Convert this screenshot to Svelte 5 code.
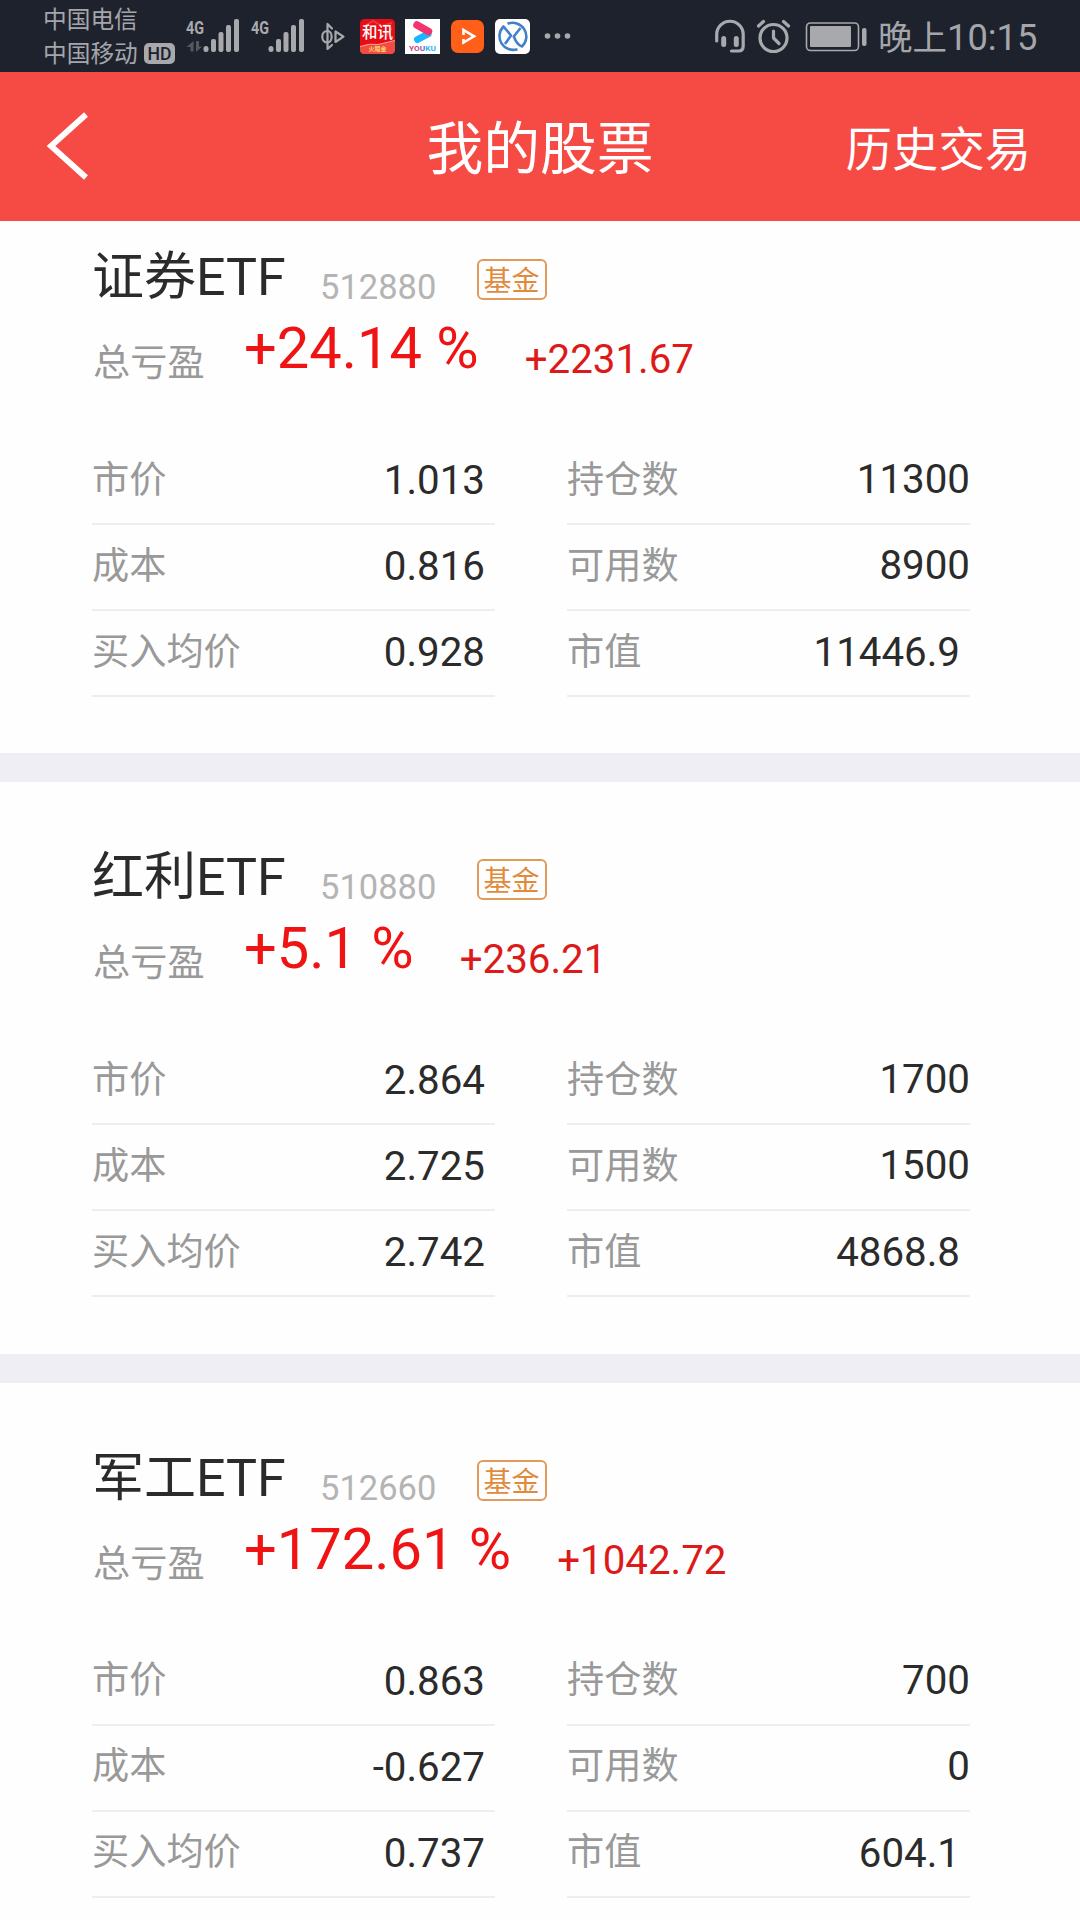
<script>
  const stocks = [
    {
      name: '证券ETF', code: '512880', pct: '+24.14 %', amount: '+2231.67',
      left: [['市价', '1.013'], ['成本', '0.816'], ['买入均价', '0.928']],
      right: [['持仓数', '11300'], ['可用数', '8900'], ['市值', '11446.9']]
    },
    {
      name: '红利ETF', code: '510880', pct: '+5.1 %', amount: '+236.21',
      left: [['市价', '2.864'], ['成本', '2.725'], ['买入均价', '2.742']],
      right: [['持仓数', '1700'], ['可用数', '1500'], ['市值', '4868.8']]
    },
    {
      name: '军工ETF', code: '512660', pct: '+172.61 %', amount: '+1042.72',
      left: [['市价', '0.863'], ['成本', '-0.627'], ['买入均价', '0.737']],
      right: [['持仓数', '700'], ['可用数', '0'], ['市值', '604.1']]
    }
  ];
</script>

{#snippet signal()}
  <g class="fill">
    <text class="net" x="0" y="33.5" textLength="18" lengthAdjust="spacingAndGlyphs">4G</text>
    <rect x="17.5" y="46" width="5" height="6" rx="2.5" />
    <rect x="25" y="39" width="5" height="13" rx="2" />
    <rect x="32.5" y="32" width="5" height="20" rx="2" />
    <rect x="40" y="25" width="5" height="27" rx="2" />
    <rect x="48" y="19" width="5" height="33" rx="2" />
  </g>
{/snippet}

<div class="screen">
  <div class="status">
    <div class="carriers">
      <span>中国电信</span>
      <span class="second">中国移动
        <svg width="31" height="22" viewBox="0 0 31 22">
          <rect class="fill" width="31" height="21" rx="5" />
          <text class="hd" x="3.5" y="17" textLength="24" lengthAdjust="spacingAndGlyphs">HD</text>
        </svg>
      </span>
    </div>

    <svg class="icons" width="400" height="72" viewBox="180 0 400 72">
      <g transform="translate(186 0)">{@render signal()}</g>
      <path class="dim" d="M193.500 52V41L186.500 47H190.500V51.500H193.500ZM196 41V52L202 46.500H199V41Z" />
      <g transform="translate(251 0)">{@render signal()}</g>
      <g class="line" stroke-width="2.2">
        <path d="M332 28.500L327.500 24V49L332 45" />
        <path d="M327.500 31C320.500 31 320.500 42.500 327.500 42.500M327.500 31C333 31 333 42.500 327.500 42.500" />
        <path d="M335.5 31.5V42L343.5 36.7Z" />
      </g>

      <g>
        <rect x="360" y="19" width="35" height="35" rx="4.5" fill="#e80d15" />
        <path d="M365 26l8-5 9 5 10-3M384 40l8-12" stroke="#f3343c" stroke-width="2" fill="none" />
        <path d="M360 46.500Q370 43 378 44.500L395 41V49.500Q395 54 390.500 54H364.500Q360 54 360 49.500Z" fill="#f04c43" />
        <path d="M360 46.500Q370 43 378 44.500L395 40.500" stroke="#ffa49b" stroke-width="1" fill="none" />
        <text class="hexun" x="362" y="37.500" textLength="31">和讯</text>
        <text class="event" x="368.500" y="51" textLength="18">火眼金</text>
      </g>

      <g>
        <rect x="405" y="19" width="35" height="35" fill="#fff" />
        <path d="M417.500 39.500L428 34" stroke="#1cb5ff" stroke-width="7" stroke-linecap="round" />
        <path d="M417 25L428.500 31.500" stroke="#f4336f" stroke-width="7.500" stroke-linecap="round" />
        <text class="youku" x="409" y="50.500" textLength="27" lengthAdjust="spacingAndGlyphs"><tspan fill="#d0427f">YO</tspan><tspan fill="#8160b6">U</tspan><tspan fill="#2fb6ef">KU</tspan></text>
      </g>

      <g>
        <rect x="451" y="20" width="33" height="33" rx="7" fill="#ff5f18" />
        <path d="M463.500 35V30L474 36.300L463.500 42.500V39" fill="none" stroke="#fff" stroke-width="2.600" />
      </g>

      <g>
        <rect x="495" y="19" width="35" height="35" rx="5" fill="#fff" />
        <g fill="none" stroke="#4281c9" stroke-width="2.600" stroke-linejoin="round">
          <path d="M507.500 23.800A13.700 13.700 0 0 1 522 46.500Q517 45 513.800 36.500L520.500 28" />
          <path d="M517.500 49.200A13.700 13.700 0 0 1 503.500 26.500L511 35.500L505 44" />
        </g>
      </g>
      <g class="fill"><circle cx="547.500" cy="36" r="2.800" /><circle cx="557.500" cy="36" r="2.800" /><circle cx="567.500" cy="36" r="2.800" /></g>
    </svg>

    <svg class="icons right" width="160" height="72" viewBox="710 0 160 72">
      <g class="line" stroke-width="3.200">
        <path d="M716.700 41V34.500A13.200 13.200 0 0 1 743.200 34.500V46Q743.200 51 738.500 51H731.500" />
        <path d="M723.700 38.500V44.500M736.300 38.500V44.500" stroke-width="5" />
        <circle cx="773.500" cy="38" r="13.500" />
        <path d="M773.500 31V38L779 43.500" />
        <path d="M758.500 26L763.500 21.500M788.500 26L783.500 21.500" />
        <rect x="806.500" y="23" width="52" height="27.500" rx="4" stroke-width="1.600" />
      </g>
      <g class="fill">
        <rect x="810" y="26" width="41" height="21" rx="1" />
        <rect x="862" y="28" width="4.500" height="18" rx="2" />
      </g>
    </svg>
    <span class="time"><span class="cjk">晚上</span>10:15</span>
  </div>

  <header>
    <svg class="back" width="60" height="80" viewBox="40 106 60 80">
      <path d="M86 114.500L51 146L86 177.500" fill="none" stroke="#fff" stroke-width="5.800" />
    </svg>
    <h1>我的股票</h1>
    <span class="history">历史交易</span>
  </header>

  <main>
    {#each stocks as s}
      <section>
        <div class="head">
          <h2>{s.name}</h2>
          <span class="code">{s.code}</span>
          <span class="badge">基金</span>
        </div>
        <div class="profit">
          <span class="label">总亏盈</span>
          <span class="pct">{s.pct}</span>
          <span class="amount">{s.amount}</span>
        </div>
        <div class="stats">
          {#each [s.left, s.right] as col}
            <div class="col">
              {#each col as [label, value]}
                <div class="row" class:inset={value.includes('.')}>
                  <span class="label">{label}</span>
                  <span class="value">{value}</span>
                </div>
              {/each}
            </div>
          {/each}
        </div>
      </section>
    {/each}
  </main>
</div>

<style>
  :global(body) { background: #fff; }
  .screen {
    width: 1080px;
    height: 1920px;
    overflow: hidden;
    display: flex;
    flex-direction: column;
    font-family: Roboto, 'Noto Sans CJK SC', sans-serif;
    color: #2b2b2b;
    background: #fefefe;
  }
  span, h1, h2 { white-space: nowrap; }
  h1, h2 { margin: 0; font-weight: 400; }

  .status {
    flex: none;
    height: 72px;
    display: flex;
    background: #1e222d;
    color: #a5a6ab;
  }
  .carriers {
    width: 137px;
    padding: 3px 0 0 43px;
    display: flex;
    flex-direction: column;
    font-size: 23.7px;
    line-height: 34px;
  }
  .second { display: flex; align-items: center; gap: 6px; }
  .icons { flex: none; }
  .icons.right { margin-left: 130px; }
  .fill { fill: #a8a9ad; }
  .dim { fill: #55585f; }
  .line { fill: none; stroke: #a8a9ad; stroke-linecap: round; stroke-linejoin: round; }
  .net { font: 700 18px Roboto, sans-serif; }
  .hd { font: 500 19px Roboto, sans-serif; fill: #1e222d; }
  .hexun { font: 500 15.5px 'Noto Sans CJK SC', sans-serif; fill: #fff; }
  .event { font: 700 6px 'Noto Sans CJK SC', sans-serif; fill: #ffd36a; }
  .youku { font: 700 7px Roboto, sans-serif; }
  .time { margin: 13px 0 0 8px; font-size: 36.3px; line-height: 50px; }
  .cjk { font-size: 34.5px; }

  header {
    flex: none;
    height: 149px;
    display: grid;
    grid-template-columns: 1fr auto 1fr;
    background: #f64a45;
    color: #fff;
  }
  .back { margin: 34px 0 0 40px; }
  h1 { margin-top: 42px; font-size: 56.8px; line-height: 72px; }
  .history { justify-self: end; margin: 46px 49px 0 0; font-size: 46.3px; line-height: 64px; }

  section { padding: 66px 0 56.5px; border-bottom: 29px solid #efeef4; }
  section:first-child { padding: 27px 0 56px; }
  .head { height: 60px; padding-left: 92px; display: flex; align-items: flex-start; }
  h2 { width: 228px; font-size: 52px; line-height: 60px; }
  .code { width: 156.5px; margin-top: 19px; font-size: 34.5px; line-height: 40px; color: #b4b4b4; }
  .badge {
    box-sizing: border-box;
    width: 70px;
    height: 41px;
    margin-top: 11px;
    border: 2px solid #e09a5a;
    border-radius: 6px;
    text-align: center;
    font-size: 28px;
    line-height: 41px;
    color: #e08a3c;
  }
  .profit { height: 131px; padding-left: 93px; display: flex; align-items: flex-start; }
  .label { font-size: 37.2px; line-height: 44px; color: #999; }
  .profit .label { width: 111px; margin-top: 33px; }
  .pct { margin: 6px 0 0 40px; font-size: 57.8px; line-height: 68px; color: #f01313; }
  .amount { margin: 28px 0 0 46px; font-size: 40.3px; line-height: 48px; color: #dc1a1a; }

  .stats { display: flex; gap: 72px; padding-left: 92px; }
  .col { width: 403px; }
  .row {
    box-sizing: border-box;
    height: 86px;
    display: flex;
    justify-content: space-between;
    align-items: flex-start;
    border-bottom: 2px solid #eee;
  }
  .row .label { margin-top: 18.5px; }
  .value { margin-top: 17px; font-size: 40.3px; line-height: 48px; }
  .inset .value { margin: 18px 10px 0 0; }
</style>
